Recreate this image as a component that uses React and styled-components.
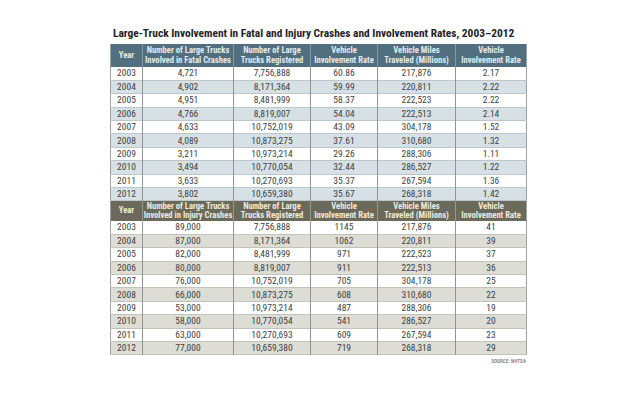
import React from "react";
import styled, { createGlobalStyle } from "styled-components";

const Global = createGlobalStyle`
  html, body { margin: 0; padding: 0; background: #ffffff; }
  body { font-family: "Roboto", "Liberation Sans", sans-serif; font-stretch: 75%; }
`;

const Page = styled.div`
  width: 640px;
  height: 400px;
  box-sizing: border-box;
  padding: 26px 0 0 110px;
`;

const Figure = styled.div`
  width: 416px;
  display: flex;
  flex-direction: column;
`;

const Title = styled.h1`
  margin: 0 0 4px 3px;
  font-family: "Roboto Condensed", "Roboto", sans-serif;
  font-stretch: 75%;
  font-size: 11.4px;
  line-height: 14px;
  font-weight: 700;
  color: #1f2326;
  white-space: nowrap;
`;

const Table = styled.table`
  width: 416px;
  border-collapse: collapse;
  table-layout: fixed;
  border-left: 1px solid #9aa2a6;
  border-right: 1px solid #9aa2a6;
  border-bottom: 1px solid #9aa2a6;
`;

const palettes = {
  fatal: { head: "#516f7e", headText: "#e2eaee", shade: "#d6e0e5", line: "#bcc6cb" },
  injury: { head: "#6b695a", headText: "#ebeadf", shade: "#dddcd5", line: "#c4c3bb" },
};

const HeadRow = styled.tr`
  background: ${(p) => palettes[p.$kind].head};
  height: ${(p) => p.$h}px;
`;

const HeadCell = styled.th`
  font-family: "Roboto", sans-serif;
  font-stretch: 75%;
  color: ${(p) => palettes[p.$kind].headText};
  font-size: 8.6px;
  line-height: 9.5px;
  font-weight: 700;
  text-align: center;
  padding: 0;
  white-space: nowrap;
  border-left: 1px solid rgba(255, 255, 255, 0.3);
  &:first-child { border-left: none; }
`;

const BodyRow = styled.tr`
  height: 13.4px;
  background: ${(p) => (p.$shaded ? palettes[p.$kind].shade : "#ffffff")};
  border-bottom: 1px solid ${(p) => palettes[p.$kind].line};
`;

const Cell = styled.td`
  font-family: "Roboto", sans-serif;
  font-stretch: 75%;
  font-size: 9.5px;
  line-height: 12px;
  padding: 0;
  text-align: center;
  color: #404345;
  border-left: 1px solid #8e9497;
  &:first-child { border-left: none; }
`;

const Source = styled.div`
  align-self: flex-end;
  margin-top: 3px;
  font-size: 5px;
  letter-spacing: 0.1px;
  color: #8a8a8a;
  font-weight: 700;
`;

const widths = [32, 91, 77, 67, 78, 71];

const fatalHead = [
  ["Year"],
  ["Number of Large Trucks", "Involved in Fatal Crashes"],
  ["Number of Large", "Trucks Registered"],
  ["Vehicle", "Involvement Rate"],
  ["Vehicle Miles", "Traveled (Millions)"],
  ["Vehicle", "Involvement Rate"],
];

const injuryHead = [
  ["Year"],
  ["Number of Large Trucks", "Involved in Injury Crashes"],
  ["Number of Large", "Trucks Registered"],
  ["Vehicle", "Involvement Rate"],
  ["Vehicle Miles", "Traveled (Millions)"],
  ["Vehicle", "Involvement Rate"],
];

const fatal = [
  ["2003", "4,721", "7,756,888", "60.86", "217,876", "2.17"],
  ["2004", "4,902", "8,171,364", "59.99", "220,811", "2.22"],
  ["2005", "4,951", "8,481,999", "58.37", "222,523", "2.22"],
  ["2006", "4,766", "8,819,007", "54.04", "222,513", "2.14"],
  ["2007", "4,633", "10,752,019", "43.09", "304,178", "1.52"],
  ["2008", "4,089", "10,873,275", "37.61", "310,680", "1.32"],
  ["2009", "3,211", "10,973,214", "29.26", "288,306", "1.11"],
  ["2010", "3,494", "10,770,054", "32.44", "286,527", "1.22"],
  ["2011", "3,633", "10,270,693", "35.37", "267,594", "1.36"],
  ["2012", "3,802", "10,659,380", "35.67", "268,318", "1.42"],
];

const injury = [
  ["2003", "89,000", "7,756,888", "1145", "217,876", "41"],
  ["2004", "87,000", "8,171,364", "1062", "220,811", "39"],
  ["2005", "82,000", "8,481,999", "971", "222,523", "37"],
  ["2006", "80,000", "8,819,007", "911", "222,513", "36"],
  ["2007", "76,000", "10,752,019", "705", "304,178", "25"],
  ["2008", "66,000", "10,873,275", "608", "310,680", "22"],
  ["2009", "53,000", "10,973,214", "487", "288,306", "19"],
  ["2010", "58,000", "10,770,054", "541", "286,527", "20"],
  ["2011", "63,000", "10,270,693", "609", "267,594", "23"],
  ["2012", "77,000", "10,659,380", "719", "268,318", "29"],
];

function Section({ kind, head, rows, h }) {
  return (
    <>
      <HeadRow $kind={kind} $h={h}>
        {head.map((lines, i) => (
          <HeadCell key={i} $kind={kind}>
            {lines.map((l, j) => (
              <React.Fragment key={j}>
                {j > 0 && <br />}
                {l}
              </React.Fragment>
            ))}
          </HeadCell>
        ))}
      </HeadRow>
      {rows.map((r, i) => (
        <BodyRow key={r[0]} $kind={kind} $shaded={i % 2 === 1}>
          {r.map((c, j) => (
            <Cell key={j}>{c}</Cell>
          ))}
        </BodyRow>
      ))}
    </>
  );
}

export default function App() {
  return (
    <>
      <Global />
      <Page>
        <Figure>
          <Title>Large-Truck Involvement in Fatal and Injury Crashes and Involvement Rates, 2003–2012</Title>
          <Table>
            <colgroup>
              {widths.map((w, i) => (
                <col key={i} style={{ width: w }} />
              ))}
            </colgroup>
            <tbody>
              <Section kind="fatal" head={fatalHead} rows={fatal} h={23} />
              <Section kind="injury" head={injuryHead} rows={injury} h={20} />
            </tbody>
          </Table>
          <Source>SOURCE: NHTSA</Source>
        </Figure>
      </Page>
    </>
  );
}
